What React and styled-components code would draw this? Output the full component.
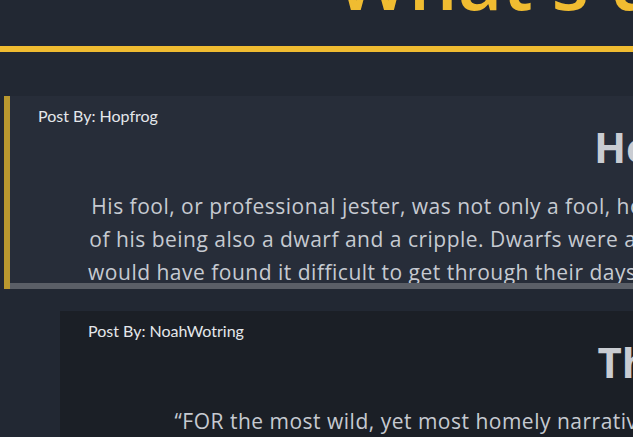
import React from 'react';
import styled, { createGlobalStyle } from 'styled-components';

const GlobalStyle = createGlobalStyle`
  *, *::before, *::after {
    box-sizing: border-box;
  }
  html, body {
    margin: 0;
    padding: 0;
    background: #222833;
    overflow: hidden;
  }
`;

const Page = styled.div`
  width: 1440px;
  font-family: "Open Sans", "Liberation Sans", sans-serif;
`;

const Header = styled.header`
  margin-top: -58px;
  padding: 0 0 27px 336px;
  border-bottom: 6px solid #f0bc31;
`;

const Title = styled.h1`
  margin: 0;
  font-family: "Open Sans", sans-serif;
  font-weight: 600;
  font-size: 77px;
  line-height: 77px;
  color: #f0bc31;
  white-space: nowrap;
`;

const Feed = styled.div`
  display: flex;
  flex-direction: column;
  gap: 22px;
  padding-top: 44px;
`;

const Card = styled.article`
  margin-left: ${p => p.$offset}px;
  width: ${p => p.$width}px;
  border-left: ${p => (p.$unread ? '6px solid #b9982f' : 'none')};
`;

const CardBody = styled.div`
  height: ${p => (p.$unread ? '193px' : 'auto')};
  overflow: hidden;
  background: ${p => (p.$unread ? '#272d39' : '#1b1f26')};
  border-bottom: ${p => (p.$unread ? '6px solid #5b5f67' : 'none')};
  padding: 10px 28px 0;
`;

const Author = styled.div`
  font-family: Lato, "Open Sans", sans-serif;
  font-size: 16px;
  line-height: 20px;
  color: #e4e7eb;
`;

const Heading = styled.h2`
  margin: 0;
  padding-top: 1px;
  text-align: center;
  font-family: "Open Sans", sans-serif;
  font-weight: 700;
  font-size: 42px;
  line-height: 40px;
  color: #c9ccd2;
`;

const Text = styled.p`
  margin: 23px 0 0;
  text-align: center;
  font-family: "Open Sans", sans-serif;
  font-size: 21px;
  letter-spacing: 0.5px;
  line-height: 33px;
  color: #c6cad1;
  white-space: nowrap;
`;

const posts = [
  {
    author: 'Hopfrog',
    title: 'Hop-Frog',
    unread: true,
    offset: 4,
    width: 1364,
    lines: [
      'His fool, or professional jester, was not only a fool, however. His value was trebled in the eyes of the king, by the fact',
      'of his being also a dwarf and a cripple. Dwarfs were as common at court, in those days, as fools; and many monarchs',
      'would have found it difficult to get through their days (days are rather longer at court than elsewhere) without both a',
      'jester to laugh with, and a dwarf to laugh at.',
    ],
  },
  {
    author: 'NoahWotring',
    title: 'The Black Cat',
    unread: false,
    offset: 60,
    width: 1358,
    lines: [
      '\u201CFOR the most wild, yet most homely narrative which I am about to pen, I neither expect nor solicit belief. Mad',
      'indeed would I be to expect it, in a case where my very senses reject their own evidence.',
    ],
  },
];

export default function App() {
  return (
    <Page>
      <GlobalStyle />
      <Header>
        <Title>What's up</Title>
      </Header>
      <Feed>
        {posts.map(post => (
          <Card key={post.author} $offset={post.offset} $width={post.width} $unread={post.unread}>
            <CardBody $unread={post.unread}>
              <Author>Post By: {post.author}</Author>
              <Heading>{post.title}</Heading>
              <Text>
                {post.lines.map((line, i) => (
                  <React.Fragment key={i}>
                    {line}
                    {i < post.lines.length - 1 && <br />}
                  </React.Fragment>
                ))}
              </Text>
            </CardBody>
          </Card>
        ))}
      </Feed>
    </Page>
  );
}
